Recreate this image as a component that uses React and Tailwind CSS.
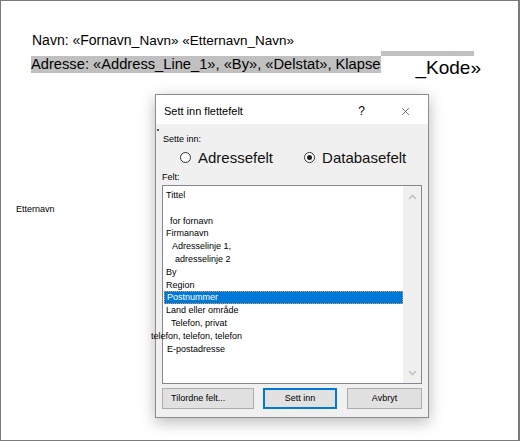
import { X } from 'lucide-react';

// Merge-field rows; indent classes are kept as full strings so Tailwind picks them up
const fields = [
  { label: 'Tittel', indent: 'pl-[3px]' },
  { label: '', indent: 'pl-[3px]' },
  { label: 'for fornavn', indent: 'pl-[7px]' },
  { label: 'Firmanavn', indent: 'pl-[3px]' },
  { label: 'Adresselinje 1,', indent: 'pl-[9px]' },
  { label: 'adresselinje 2', indent: 'pl-[12px]' },
  { label: 'By', indent: 'pl-[3px]' },
  { label: 'Region', indent: 'pl-[3px]' },
  { label: 'Postnummer', indent: 'pl-[3px]', selected: true },
  { label: 'Land eller område', indent: 'pl-[3px]' },
  { label: 'Telefon, privat', indent: 'pl-[8px]' },
  { label: 'telefon, telefon, telefon', indent: 'ml-[-12px]' },
  { label: 'E-postadresse', indent: 'pl-[4px]' },
];

function Chevron({ down }) {
  return (
    <svg width="9" height="6" viewBox="0 0 9 6" className="block">
      <polyline
        points={down ? '1,1 4.5,4.5 8,1' : '1,5 4.5,1.5 8,5'}
        fill="none"
        stroke="#c2c2c2"
        strokeWidth="1.6"
      />
    </svg>
  );
}

function Radio({ checked, label, className = '' }) {
  return (
    <div className={`flex items-center ${className}`}>
      <span className="flex h-[11px] w-[11px] items-center justify-center rounded-full border border-[#333] bg-white">
        {checked && <span className="h-[5px] w-[5px] rounded-full bg-[#222]" />}
      </span>
      <span className="ml-[7px] text-[15px] leading-[17px] text-[#111]">{label}</span>
    </div>
  );
}

function MergeFieldDialog() {
  return (
    <div className="absolute left-[154px] top-[93px] flex h-[324px] w-[274px] flex-col border border-[#8c8c8c] bg-[#f0f0f0] font-['Liberation_Sans',Arial,sans-serif] text-black shadow-[0_4px_14px_rgba(0,0,0,0.28)]">
      <div className="flex h-[29px] shrink-0 items-center bg-white pl-[8px] pt-[3px]">
        <span className="text-[11px]">Sett inn flettefelt</span>
        <span className="ml-auto mr-[34px] text-[12px]">?</span>
        <X size={13} strokeWidth={1.1} className="mr-[16px] text-[#222]" />
      </div>

      <div className="flex flex-1 flex-col px-[6px] pb-[8px]">
        <div className="ml-[-5px] mt-[5px] h-[2px] w-[2px] bg-[#555]" />
        <div className="mt-[3px] pl-[1px] text-[9px] leading-[11px]">Sette inn:</div>
        <div className="mt-[4px] flex h-[17px] items-center pl-[18px]">
          <Radio label="Adressefelt" />
          <Radio checked label="Databasefelt" className="ml-[31px]" />
        </div>
        <div className="mt-[6px] text-[9px] leading-[11px]">Felt:</div>

        <div className="mt-[2px] flex h-[199px] border border-[#828790] bg-white">
          <ul className="flex-1 pt-[3px] text-[9px] leading-[12.8px]">
            {fields.map((f, i) =>
              f.selected ? (
                <li
                  key={i}
                  className="ml-[1px] h-[12.8px] whitespace-nowrap bg-[#0078d7] pl-[3px] text-white outline outline-1 -outline-offset-1 outline-dotted outline-[#e49a4a]"
                >
                  {f.label}
                </li>
              ) : (
                <li key={i} className={`h-[12.8px] whitespace-nowrap ${f.indent}`}>
                  {f.label}
                </li>
              )
            )}
          </ul>
          <div className="flex w-[18px] flex-col items-center justify-between bg-[#f0f0f0] pb-[7px] pt-[8px]">
            <Chevron />
            <Chevron down />
          </div>
        </div>

        <div className="mt-[4px] flex h-[21px] text-[9px]">
          <button className="flex w-[92px] items-center border border-[#adadad] bg-[#e1e1e1] pl-[8px]">
            Tilordne felt...
          </button>
          <button className="ml-[9px] flex w-[74px] items-center justify-center border-2 border-[#0078d7] bg-[#e1e1e1]">
            Sett inn
          </button>
          <button className="ml-[10px] flex w-[75px] items-center justify-center border border-[#adadad] bg-[#e1e1e1]">
            Avbryt
          </button>
        </div>
      </div>
    </div>
  );
}

export default function App() {
  return (
    <div className="relative h-[441px] w-[520px] overflow-hidden border border-r-2 border-[#7a7a7a] bg-white font-['Liberation_Sans',Arial,sans-serif] text-black">
      <div className="flex flex-col">
        <div className="ml-[31px] mt-[31px] flex h-[17px] items-baseline whitespace-nowrap leading-[17px]">
          <span className="text-[14px]">Navn: «Fornavn_</span>
          <span className="text-[13.5px]">Navn» «Etternavn_Navn»</span>
        </div>

        <div className="ml-[30px] mt-[7px] flex items-start whitespace-nowrap">
          <span className="h-[17px] bg-[#c0c0c0] pr-[1px] text-[14.7px] leading-[17px]">
            Adresse: «Address_Line_1», «By», «Delstat», Klapse
          </span>
          <div className="flex flex-col">
            <div className="-mt-[5px] h-[5px] w-[93px] bg-[#c0c0c0]" />
            <span className="ml-[34px] mt-[2px] text-[19px] leading-[19px]">_Kode»</span>
          </div>
        </div>

        <div className="ml-[15px] mt-[127px] text-[9px] leading-[11px]">Etternavn</div>
      </div>

      <MergeFieldDialog />
    </div>
  );
}
